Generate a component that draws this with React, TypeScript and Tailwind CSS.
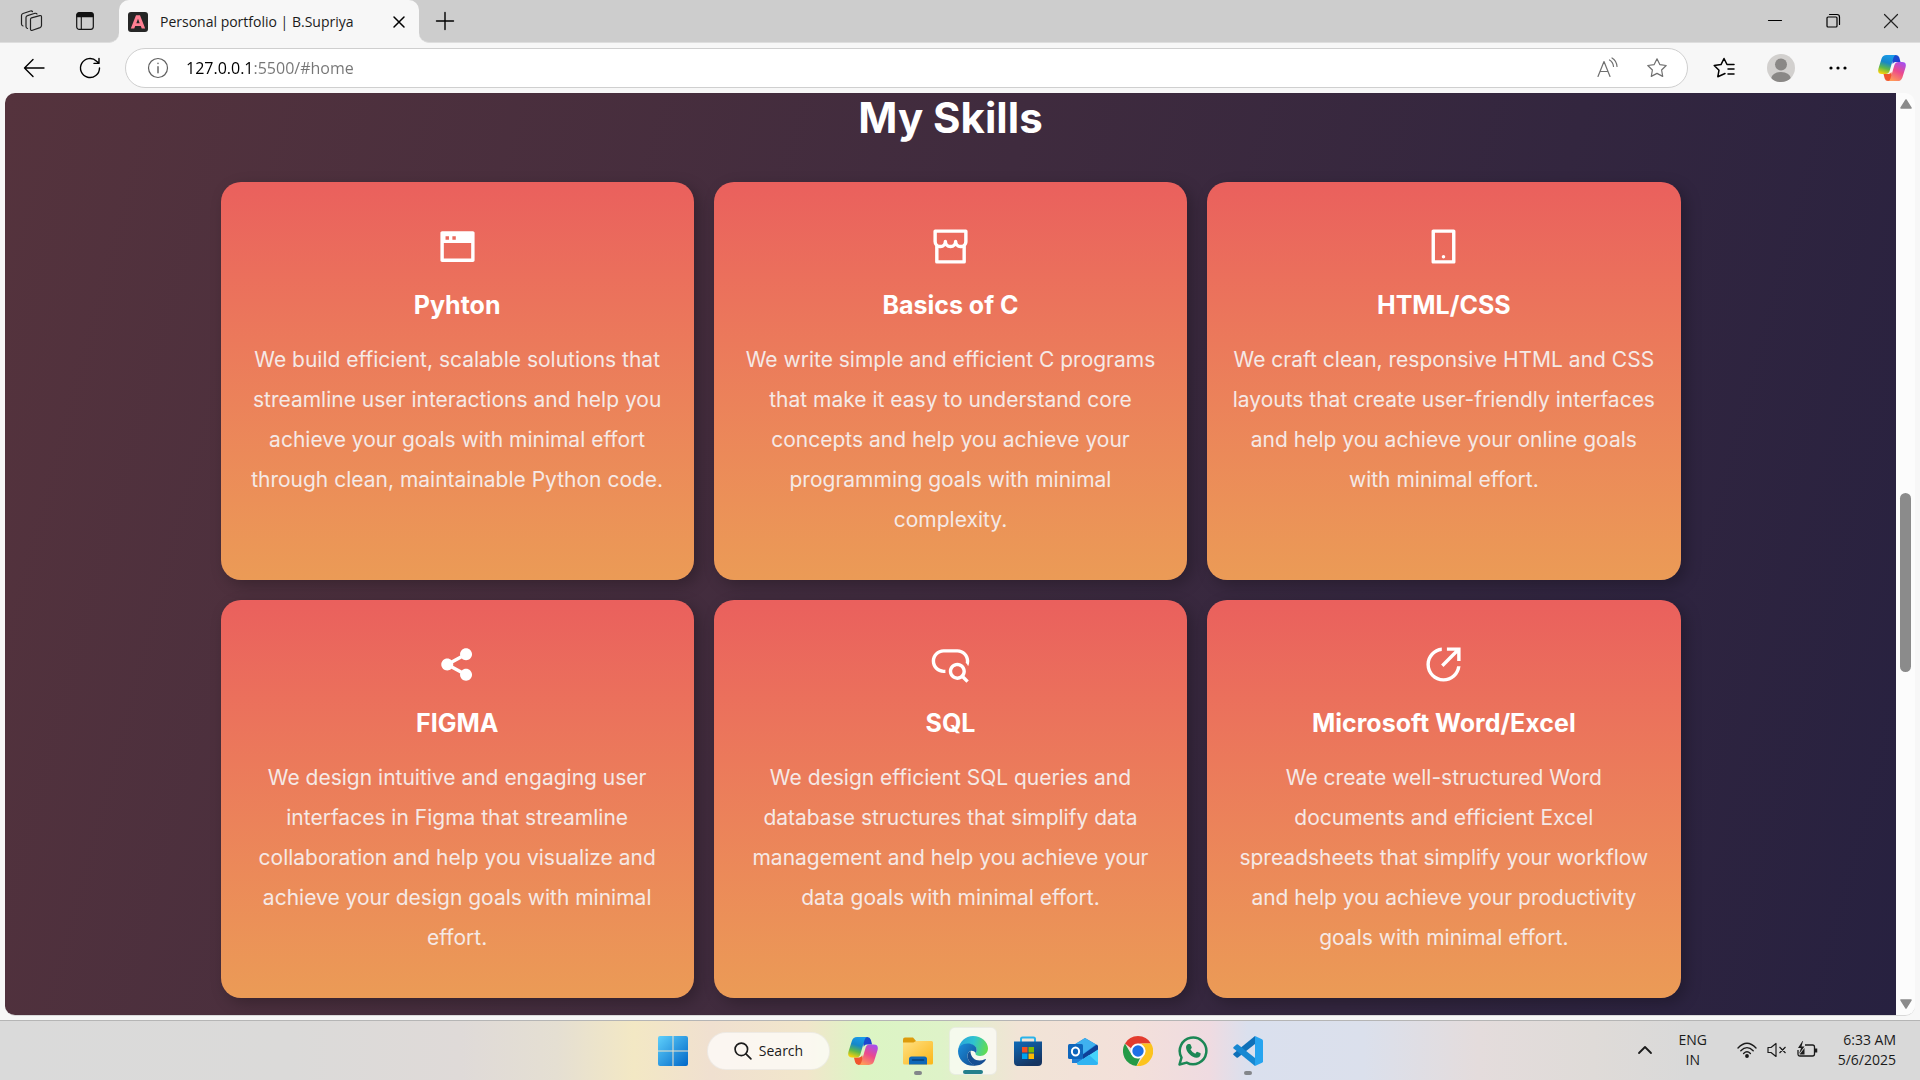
import type { ComponentType, ReactNode } from "react";
import {
  RiSeoLine,
  RiShareCircleLine,
  RiShareFill,
  RiSmartphoneLine,
  RiWindowFill,
} from "react-icons/ri";

type Skill = {
  title: string;
  text: string;
  Icon: ComponentType<{ className?: string }>;
};

function StorefrontIcon({ className }: { className?: string }) {
  return (
    <svg viewBox="0 0 24 24" fill="currentColor" className={className} aria-hidden="true">
      <path d="M21 11.646V21a1 1 0 0 1-1 1H4a1 1 0 0 1-1-1v-9.354A3.985 3.985 0 0 1 2 9V3a1 1 0 0 1 1-1h18a1 1 0 0 1 1 1v6c0 1.014-.378 1.940-1 2.646zm-2 1.228a4.007 4.007 0 0 1-4-1.228A3.990 3.990 0 0 1 12 13a3.990 3.990 0 0 1-3-1.354 3.990 3.990 0 0 1-4 1.228V20h14v-7.126zM14 9a1 1 0 0 1 2 0 2 2 0 1 0 4 0V4H4v5a2 2 0 1 0 4 0 1 1 0 1 1 2 0 2 2 0 1 0 4 0z" />
    </svg>
  );
}

const skills: Skill[] = [
  {
    title: "Pyhton",
    Icon: RiWindowFill,
    text: "We build efficient, scalable solutions that\nstreamline user interactions and help you\nachieve your goals with minimal effort\nthrough clean, maintainable Python code.",
  },
  {
    title: "Basics of C",
    Icon: StorefrontIcon,
    text: "We write simple and efficient C programs\nthat make it easy to understand core\nconcepts and help you achieve your\nprogramming goals with minimal\ncomplexity.",
  },
  {
    title: "HTML/CSS",
    Icon: RiSmartphoneLine,
    text: "We craft clean, responsive HTML and CSS\nlayouts that create user-friendly interfaces\nand help you achieve your online goals\nwith minimal effort.",
  },
  {
    title: "FIGMA",
    Icon: RiShareFill,
    text: "We design intuitive and engaging user\ninterfaces in Figma that streamline\ncollaboration and help you visualize and\nachieve your design goals with minimal\neffort.",
  },
  {
    title: "SQL",
    Icon: RiSeoLine,
    text: "We design efficient SQL queries and\ndatabase structures that simplify data\nmanagement and help you achieve your\ndata goals with minimal effort.",
  },
  {
    title: "Microsoft Word/Excel",
    Icon: RiShareCircleLine,
    text: "We create well-structured Word\ndocuments and efficient Excel\nspreadsheets that simplify your workflow\nand help you achieve your productivity\ngoals with minimal effort.",
  },
];

function SkillCard({ title, text, Icon }: Skill) {
  return (
    <article className="flex flex-col items-center rounded-[20px] bg-linear-to-b from-[#ea605d] to-[#eb9b56] px-3 py-10 text-center shadow-[5px_5px_15px_rgba(0,0,0,0.25)]">
      <div className="flex h-12 items-center justify-center">
        <Icon className="size-[41px] text-white" />
      </div>
      <h3 className="mt-4 text-[25px] leading-[38px] font-bold text-white">{title}</h3>
      <p className="mt-4 text-[21px] leading-10 whitespace-pre-line text-[#f5e9e6]">{text}</p>
    </article>
  );
}

/* ---------- Browser icons ---------- */

function Line({ children, className }: { children: ReactNode; className?: string }) {
  return (
    <svg
      viewBox="0 0 24 24"
      fill="none"
      stroke="currentColor"
      strokeWidth="1.2"
      strokeLinecap="round"
      strokeLinejoin="round"
      className={className ?? "size-6"}
      aria-hidden="true"
    >
      {children}
    </svg>
  );
}

function WorkspacesIcon() {
  return (
    <Line className="size-6">
      <path d="M11.500 8.900 19.800 6.600Q21.500 6.200 21.500 8V16.500Q21.500 18 20 18.600L12.500 21.300Q10.500 22 10.500 20V10.500Q10.500 9.200 11.500 8.900Z" />
      <path d="M7.500 19.500Q6 19 6 17.500V8.500Q6 7 7.500 6.600L15 4.300Q16.500 4 17 5" />
      <path d="M3 17Q1.500 16.500 1.500 15V6.500Q1.500 5 3 4.500L10.500 2Q12 1.700 12.500 2.600" />
    </Line>
  );
}

function TabActionsIcon() {
  return (
    <svg viewBox="0 0 18 18" className="size-[18px]" fill="none" aria-hidden="true">
      <rect x=".7" y=".7" width="16.600" height="16.600" rx="2.500" stroke="#111" strokeWidth="1.200" />
      <path d="M.5 3Q.5.500 3 .500h12Q17.500.500 17.500 3v2.200H.500Z" fill="#111" />
      <path d="M5.300 5v12.300" stroke="#111" strokeWidth="1.100" />
    </svg>
  );
}

function FavIcon() {
  return (
    <svg viewBox="0 0 20 20" className="size-5" aria-hidden="true">
      <rect width="20" height="20" rx="3" fill="#262626" />
      <path
        d="M8 3.200h4L17.200 16.500h-3.500l-.9-2.500H7.200l-.9 2.500H2.800ZM10 6.800 8.300 11.300h3.400Z"
        fill="#ff7f92"
        fillRule="evenodd"
      />
    </svg>
  );
}

function CopilotIcon({ id, className }: { id: string; className: string }) {
  return (
    <svg viewBox="0 0 28 26" className={className} aria-hidden="true">
      <defs>
        <linearGradient id={id + "a"} x1="0.600" y1="0" x2="0.300" y2="1">
          <stop offset="0" stopColor="#1a9be8" />
          <stop offset=".4" stopColor="#1687c9" />
          <stop offset=".7" stopColor="#5db84a" />
          <stop offset="1" stopColor="#f5d20c" />
        </linearGradient>
        <linearGradient id={id + "b"} x1="0.800" y1="0" x2="0.300" y2="1">
          <stop offset="0" stopColor="#a44ff0" />
          <stop offset=".5" stopColor="#ec4a8c" />
          <stop offset="1" stopColor="#ff9a58" />
        </linearGradient>
        <linearGradient id={id + "c"} x1="0" y1="0" x2="1" y2="1">
          <stop offset="0" stopColor="#1556c8" />
          <stop offset="1" stopColor="#2439d8" />
        </linearGradient>
      </defs>
      <path d="M13 0h5q2.500 0 3.300 2.600L22.500 7h-5q-2 0-2.800 2Z" fill={"url(#" + id + "c)"} />
      <path d="M15 26h-5q-2.500 0-3.300-2.600L5.500 19h5q2 0 2.800-2Z" fill="#f0562f" />
      <path
        d="M8.500 0H18q-1.700 0-2.500 2.500L11.600 16q-1 3-4 3H4q-5 0-3.500-5.500L3.600 3.600Q4.700 0 8.500 0Z"
        fill={"url(#" + id + "a)"}
      />
      <path
        d="M19.500 26H10q1.700 0 2.500-2.500L16.400 10q1-3 4-3H24q5 0 3.500 5.500l-3.100 9.900q-1.100 3.600-4.900 3.600Z"
        fill={"url(#" + id + "b)"}
      />
    </svg>
  );
}

const STAR = "M12 2.800 14.800 8.600 21.200 9.500 16.600 14 17.700 20.400 12 17.400 6.300 20.400 7.400 14 2.800 9.500 9.200 8.600Z";

function TabStrip() {
  return (
    <header className="flex h-[43px] bg-[#f7f7f7]">
      <div className="flex w-[119px] items-center gap-8 rounded-br-[10px] border-b border-[#dedede] bg-[#cdcdcd] pl-5">
        <button aria-label="Workspaces" className="text-[#222]">
          <WorkspacesIcon />
        </button>
        <button aria-label="Tab actions menu">
          <TabActionsIcon />
        </button>
      </div>
      <div className="w-[300px] bg-[linear-gradient(#cdcdcd_50%,#f7f7f7_50%)]">
        <div className="flex h-full items-center rounded-t-[10px] bg-[#f7f7f7] pr-2 pl-[9px]">
          <FavIcon />
          <span className="ml-3 flex-1 text-sm whitespace-nowrap text-[#1b1b1b]">
            Personal portfolio | B.Supriya
          </span>
          <button aria-label="Close tab" className="flex size-6 items-center justify-center">
            <Line className="size-6">
              <path d="m7 7 10 10M17 7 7 17" strokeWidth="1.500" />
            </Line>
          </button>
        </div>
      </div>
      <div className="flex flex-1 items-center justify-between rounded-bl-[10px] border-b border-[#dedede] bg-[#cdcdcd] pl-3.5">
        <button aria-label="New tab">
          <Line className="size-6">
            <path d="M12 3.500v17M3.500 12h17" strokeWidth="1.400" />
          </Line>
        </button>
        <div className="flex h-full">
          <button aria-label="Minimize" className="flex w-[58px] items-center justify-center">
            <Line className="size-6">
              <path d="M5.500 11.500h13" stroke="#000" />
            </Line>
          </button>
          <button aria-label="Restore" className="flex w-[58px] items-center justify-center">
            <Line className="size-6">
              <rect x="6" y="8" width="10" height="10" rx="1" />
              <path d="M8.500 5.500H16q2.500 0 2.500 2.500v7.500" />
            </Line>
          </button>
          <button aria-label="Close" className="flex w-[58px] items-center justify-center">
            <Line className="size-6">
              <path d="m5.500 5.500 13 13M18.500 5.500l-13 13" stroke="#222" />
            </Line>
          </button>
        </div>
      </div>
    </header>
  );
}

function Toolbar() {
  return (
    <div className="flex h-[50px] items-center bg-[#f7f7f7] pr-3.5 pl-[22px]">
      <button aria-label="Back" className="mr-8">
        <Line className="size-6">
          <path d="M22 12H2.500M11 3.500 2.500 12l8.500 8.500" strokeWidth="1.400" />
        </Line>
      </button>
      <button aria-label="Refresh" className="mr-[23px]">
        <Line className="size-6">
          <path d="M21.500 12a9.500 9.500 0 1 1-2.900-6.800L21 7.300M21 2.500v4.900h-5" strokeWidth="1.400" />
        </Line>
      </button>
      <div className="flex h-10 flex-1 items-center rounded-full border border-[#cfcfcf] bg-white px-5">
        <Line className="size-6 text-[#5f5f5f]">
          <circle cx="12" cy="12" r="9.500" />
          <path d="M12 10.800v6M12 7.300v.300" strokeWidth="1.400" />
        </Line>
        <input
          aria-label="Address"
          defaultValue="127.0.0.1:5500/#home"
          className="ml-4 h-8 min-w-0 flex-1 bg-linear-to-r from-black from-[68px] to-[#757575] to-[68px] bg-clip-text text-base text-transparent outline-none"
        />
        <button aria-label="Read aloud" className="mr-[26px] text-[#707070]">
          <Line className="size-6">
            <path d="M3 20.500 9 5.500l6 15M5 15.500h8M14.500 4q3.500 2 4 6.500M17 2q4.500 2.500 5 8.500" />
          </Line>
        </button>
        <button aria-label="Add to favorites" className="mr-[-2px] text-[#707070]">
          <Line className="size-6">
            <path d={STAR} />
          </Line>
        </button>
      </div>
      <button aria-label="Favorites" className="ml-6 text-black">
        <Line className="size-6">
          <path
            d="M13 17.500 5.800 20.800 7 14.200 2.200 9.500 9 8.600 12 2.500l3 6h7M16 13h6M16 18h6"
            strokeWidth="1.500"
          />
        </Line>
      </button>
      <button aria-label="Profile" className="ml-[31px]">
        <svg viewBox="0 0 28 28" className="size-7" aria-hidden="true">
          <clipPath id="avatar">
            <circle cx="14" cy="14" r="14" />
          </clipPath>
          <circle cx="14" cy="14" r="14" fill="#d2d0ce" />
          <g clipPath="url(#avatar)" fill="#8a8886">
            <circle cx="14" cy="10.500" r="6" />
            <ellipse cx="14" cy="25" rx="10" ry="7" />
          </g>
        </svg>
      </button>
      <button aria-label="Settings and more" className="ml-[31px]">
        <svg viewBox="0 0 24 24" className="size-6" aria-hidden="true">
          <circle cx="5" cy="12" r="1.600" />
          <circle cx="12" cy="12" r="1.600" />
          <circle cx="19" cy="12" r="1.600" />
        </svg>
      </button>
      <button aria-label="Copilot" className="ml-7">
        <CopilotIcon id="tc" className="h-[26px] w-7" />
      </button>
    </div>
  );
}

function Scrollbar() {
  return (
    <div className="flex w-[19px] flex-col items-center justify-between bg-[#fcfcfc] py-1.5">
      <svg viewBox="0 0 12 10" className="h-2.5 w-3" aria-hidden="true">
        <path d="M6 1 11 9H1Z" fill="#8b8b8b" stroke="#8b8b8b" strokeWidth="1.500" strokeLinejoin="round" />
      </svg>
      <div className="flex w-[11px] flex-1 flex-col pt-[9px]">
        <div className="grow-[373]" />
        <div className="grow-[178] rounded-full bg-[#8b8b8b]" />
        <div className="grow-[325]" />
      </div>
      <svg viewBox="0 0 12 10" className="h-2.5 w-3" aria-hidden="true">
        <path d="M6 9 1 1h10Z" fill="#8b8b8b" stroke="#8b8b8b" strokeWidth="1.500" strokeLinejoin="round" />
      </svg>
    </div>
  );
}

/* ---------- Taskbar ---------- */

function WindowsLogo() {
  return (
    <svg viewBox="0 0 30 30" className="size-[30px]" aria-hidden="true">
      <defs>
        <linearGradient id="win" x1="0" y1="0" x2="1" y2="1">
          <stop offset="0" stopColor="#5fd0fb" />
          <stop offset="1" stopColor="#0067c8" />
        </linearGradient>
      </defs>
      <path
        d="M2 0h12.500v14.500H0V2q0-2 2-2Zm13.500 0H28q2 0 2 2v12.500H15.500ZM0 15.500h14.500V30H2q-2 0-2-2Zm15.500 0H30V28q0 2-2 2H15.500Z"
        fill="url(#win)"
      />
    </svg>
  );
}

function FolderIcon() {
  return (
    <svg viewBox="0 0 30 28" className="h-7 w-[30px]" aria-hidden="true">
      <defs>
        <linearGradient id="fold" x1="0" y1="0" x2="1" y2="1">
          <stop offset="0" stopColor="#ffe083" />
          <stop offset="1" stopColor="#fbb617" />
        </linearGradient>
      </defs>
      <path d="M0 2.500Q0 .500 2 .500h8l3 3.500v6H0Z" fill="#dd9b0c" />
      <path d="M0 5.500h10.500L13 4h15.500Q30 4 30 5.500V26q0 1.500-1.500 1.500h-27Q0 27.500 0 26Z" fill="url(#fold)" />
      <path d="M6 22q0-2.500 2.500-2.500h13Q24 19.500 24 22v5.500H6Z" fill="#0f68b8" />
      <path d="M9.500 23h11" stroke="#073f7a" strokeWidth="1.500" strokeLinecap="round" />
    </svg>
  );
}

function EdgeIcon() {
  return (
    <svg viewBox="0 0 30 30" className="size-[30px]" aria-hidden="true">
      <defs>
        <linearGradient id="edgeTop" x1="0" y1="0.300" x2="1" y2="0.500">
          <stop offset="0" stopColor="#2aa5dc" />
          <stop offset=".5" stopColor="#2fc3cf" />
          <stop offset="1" stopColor="#62dd4f" />
        </linearGradient>
        <linearGradient id="edgeLow" x1="0" y1="0" x2="1" y2="1">
          <stop offset="0" stopColor="#1b8fdc" />
          <stop offset="1" stopColor="#114a8f" />
        </linearGradient>
      </defs>
      <path
        d="M.3 13.500C1.500 5.500 7.500 0 15 0c8.500 0 15 6 15 12.300 0 4.700-3.500 7.700-7.800 7.700-3.200 0-4.800-1.200-4.800-2.200 0-.8 1.300-1.300 1.300-3.800 0-3-3-5.500-7.200-5.500C6 8.500 2 10.500.3 13.500Z"
        fill="url(#edgeTop)"
      />
      <path
        d="M0 15c0-4.500 4.500-7.500 9.500-7.500 4.800 0 9.200 2.500 9.200 6.500 0 1.500-.6 2.500-1 3.100-.9-1.500-2.500-2.300-4-2.300-2.300 0-4.200 2.200-4.200 5C9.500 25 14 29 18.500 29.500 8 31.500 0 24 0 15Z"
        fill="url(#edgeLow)"
      />
      <path
        d="M12.500 15c-1.700.8-3 2.500-3 4.800 0 5.200 4.700 9.700 9 9.700 4 0 7.500-3 9.200-5.500.4-.7-.2-1.200-.8-.8-6.500 3.300-14.400.300-14.400-8.200Z"
        fill="#154f93"
      />
    </svg>
  );
}

function StoreIcon() {
  return (
    <svg viewBox="0 0 30 30" className="size-[30px]" aria-hidden="true">
      <defs>
        <linearGradient id="shop" x1="0" y1="0" x2="0.500" y2="1">
          <stop offset="0" stopColor="#0e6ab8" />
          <stop offset="1" stopColor="#153461" />
        </linearGradient>
      </defs>
      <path d="M8 7V3q0-1.500 1.500-1.500h11Q22 1.500 22 3v4" fill="none" stroke="#2ab3ea" strokeWidth="2" />
      <path d="M1 5.500h28V26q0 4-4 4H5q-4 0-4-4Z" fill="url(#shop)" />
      <path d="M9 11h5.500v5.500H9Z" fill="#f25022" />
      <path d="M15.500 11H21v5.500h-5.500Z" fill="#7fba00" />
      <path d="M9 17.500h5.500V23H9Z" fill="#00a4ef" />
      <path d="M15.500 17.500H21V23h-5.500Z" fill="#ffb900" />
    </svg>
  );
}

function OutlookIcon() {
  return (
    <svg viewBox="0 0 30 28" className="h-7 w-[30px]" aria-hidden="true">
      <path d="M4 9 17 1l12 7v4L10 26H4Z" fill="#1f7fd6" />
      <path d="m17 1 11 6.500L15 17 6 8Z" fill="#3fb1ef" />
      <path d="m29 7.500-14 10v5L30 13V9Z" fill="#0e3f96" />
      <path d="M30 12.500V26q0 2-2 2H11q-2 0-2-2Z" fill="#45d3fb" />
      <path d="M9 26 21 18l9 8q0 2-2 2H11q-2 0-2-2Z" fill="#2fb4f2" />
      <rect y="7" width="15" height="15" rx="1.500" fill="#0f66bc" />
      <ellipse cx="7.500" cy="14.500" rx="3.600" ry="4" fill="none" stroke="#fff" strokeWidth="2" />
    </svg>
  );
}

function ChromeIcon() {
  return (
    <svg viewBox="0 0 30 30" className="size-[30px]" aria-hidden="true">
      <path d="M15 0a15 15 0 0 1 13 7.500H15a7.500 7.500 0 0 0-7 4.700L2 7.500A15 15 0 0 1 15 0Z" fill="#e33b2e" />
      <path d="M2 7.500 8.500 18.700A7.500 7.500 0 0 0 17 22.200L13.500 30A15 15 0 0 1 2 7.500Z" fill="#249a46" />
      <path d="M28 7.500A15 15 0 0 1 13.500 30l8-11.300A7.500 7.500 0 0 0 20 9.500L18 7.500Z" fill="#fcc31e" />
      <circle cx="15" cy="15" r="7.300" fill="#fff" />
      <circle cx="15" cy="15" r="5.700" fill="#1d70e5" />
    </svg>
  );
}

function WhatsAppIcon() {
  return (
    <svg viewBox="0 0 30 30" className="size-[30px]" aria-hidden="true">
      <path
        d="M1.500 28.500 3.500 21.500A13.300 13.300 0 1 1 8.700 26.600Z"
        fill="none"
        stroke="#1b8755"
        strokeWidth="2.500"
        strokeLinejoin="round"
      />
      <path
        d="M10.500 8h1.300q.6 0 .9.700l1 2.500q.2.600-.2 1.100l-1 1.200q1.600 3 4.800 4.200l1.300-1.600q.4-.5 1-.2l2.600 1.200q.6.300.5 1-.3 3.700-4.200 3.700C14 21.800 8 16 8 11.200 8 9.500 9.400 8 10.500 8Z"
        fill="#1b8755"
      />
    </svg>
  );
}

function VSCodeIcon() {
  return (
    <svg viewBox="0 0 30 30" className="size-[30px]" aria-hidden="true">
      <path d="M22 0v8L5 21.500q-.8.600-1.500 0L.6 19q-.8-.8 0-1.500Z" fill="#0f70b8" />
      <path d="M22 30v-8L5 8.500q-.8-.6-1.500 0L.6 11q-.8.800 0 1.500Z" fill="#1788d2" />
      <path d="m22 0 7 3.200q1 .5 1 1.600v20.400q0 1.100-1 1.600L22 30Z" fill="#27a4ef" />
    </svg>
  );
}

function TaskApp({
  label,
  children,
  state,
}: {
  label: string;
  children: ReactNode;
  state?: "open" | "active";
}) {
  return (
    <button
      aria-label={label}
      className={
        state === "active"
          ? "relative flex size-12 items-center justify-center rounded-md border border-black/5 bg-white/65"
          : "relative flex size-12 items-center justify-center rounded-md"
      }
    >
      {children}
      {state === "active" && (
        <span className="absolute bottom-0 left-1/2 h-1 w-5 -translate-x-1/2 rounded-full bg-[#24808c]" />
      )}
      {state === "open" && (
        <span className="absolute bottom-0 left-1/2 h-1 w-2 -translate-x-1/2 rounded-full bg-[#83868a]" />
      )}
    </button>
  );
}

function Taskbar() {
  return (
    <footer className="grid h-[60px] grid-cols-[1fr_auto_1fr] items-center border-t border-[#b5b5b5] bg-[linear-gradient(90deg,#dadada_0%,#dbdad9_15%,#dfdad8_24%,#e5dfd2_29%,#f3e8c4_33%,#f0e0d0_37%,#f1e6cb_42%,#dcf5c4_45%,#def3c8_49%,#f1e4d6_53%,#f3e0da_59%,#efdbe1_63%,#dae0ee_65%,#dbe0ec_71%,#e4dcdc_77%,#dfdbd8_83%,#d9d9d9_88%,#d9d9d9_100%)]">
      <div />
      <nav aria-label="Taskbar" className="flex items-center gap-[7px]">
        <TaskApp label="Start">
          <WindowsLogo />
        </TaskApp>
        <button className="mr-0.5 ml-[3px] flex h-[38px] w-[123px] items-center justify-center gap-1.5 rounded-full border border-black/5 bg-white/70 text-sm text-[#1b1b1b]">
          <Line className="size-5">
            <circle cx="10" cy="10" r="7.500" strokeWidth="2" />
            <path d="m15.500 15.500 6 6" strokeWidth="2" />
          </Line>
          Search
        </button>
        <TaskApp label="Copilot">
          <CopilotIcon id="bc" className="h-7 w-[30px]" />
        </TaskApp>
        <TaskApp label="File Explorer" state="open">
          <FolderIcon />
        </TaskApp>
        <TaskApp label="Microsoft Edge" state="active">
          <EdgeIcon />
        </TaskApp>
        <TaskApp label="Microsoft Store">
          <StoreIcon />
        </TaskApp>
        <TaskApp label="Outlook">
          <OutlookIcon />
        </TaskApp>
        <TaskApp label="Google Chrome">
          <ChromeIcon />
        </TaskApp>
        <TaskApp label="WhatsApp">
          <WhatsAppIcon />
        </TaskApp>
        <TaskApp label="Visual Studio Code" state="open">
          <VSCodeIcon />
        </TaskApp>
      </nav>
      <div className="flex items-center justify-end pr-6 pb-0.5 text-sm leading-5 text-[#1b1b1b]">
        <button aria-label="Show hidden icons" className="mr-4">
          <Line className="size-6">
            <path d="m6 15 6-6 6 6" strokeWidth="1.800" />
          </Line>
        </button>
        <button className="mr-6 w-10 text-center">
          ENG
          <br />
          IN
        </button>
        <button aria-label="Network, volume and battery" className="mr-5 flex items-center gap-2.5">
          <svg viewBox="0 0 20 16" className="h-4 w-5" fill="none" stroke="#1b1b1b" strokeWidth="1.400" strokeLinecap="round" aria-hidden="true">
            <path d="M1 6q9-9.500 18 0M3.800 8.800q6.200-6.300 12.400 0M6.600 11.500q3.400-3.300 6.800 0" />
            <circle cx="10" cy="14" r="1.200" fill="#1b1b1b" />
          </svg>
          <svg viewBox="0 0 20 16" className="h-4 w-5" fill="none" stroke="#1b1b1b" strokeWidth="1.200" strokeLinejoin="round" aria-hidden="true">
            <path d="M1 5.500h3L9 1.500v13l-5-4H1ZM12.500 5l6 6m0-6-6 6" />
          </svg>
          <svg viewBox="0 0 21 17" className="h-[17px] w-[21px]" fill="none" stroke="#1b1b1b" strokeWidth="1.300" aria-hidden="true">
            <path d="M8 4h7.500Q17.500 4 17.500 6v7q0 2-2 2H3q-2 0-2-2V9" />
            <path d="M19 7.500v4" strokeWidth="2.500" />
            <path d="M5.500 0 1 7h3L2 13 7.500 5.500h-3L6 0Z" fill="#1b1b1b" stroke="none" />
            <path d="M2.500 13.500h5V7Z" fill="#1b1b1b" stroke="none" />
          </svg>
        </button>
        <button className="text-right">
          <time dateTime="2025-05-06T06:33">
            6:33 AM
            <br />
            5/6/2025
          </time>
        </button>
      </div>
    </footer>
  );
}

export default function App() {
  return (
    <div className="flex min-h-screen flex-col bg-[#f7f7f7] font-['Open_Sans',sans-serif]">
      <TabStrip />
      <Toolbar />
      <div className="mx-[5px] mb-1 flex flex-1 overflow-hidden rounded-[10px] border-b border-[#d8d8d8]">
        <main className="flex-1 bg-[linear-gradient(105deg,#55333d_0%,#3f2b3e_48%,#272140_100%)] px-8 font-['Inter',sans-serif]">
          <h2 className="pt-px text-center text-[42px] leading-[48px] font-bold text-white">My Skills</h2>
          <section
            aria-label="Skills"
            className="mx-auto mt-10 grid w-full max-w-[1460px] grid-cols-3 gap-5 pb-[17px]"
          >
            {skills.map((skill) => (
              <SkillCard key={skill.title} {...skill} />
            ))}
          </section>
        </main>
        <Scrollbar />
      </div>
      <Taskbar />
    </div>
  );
}
